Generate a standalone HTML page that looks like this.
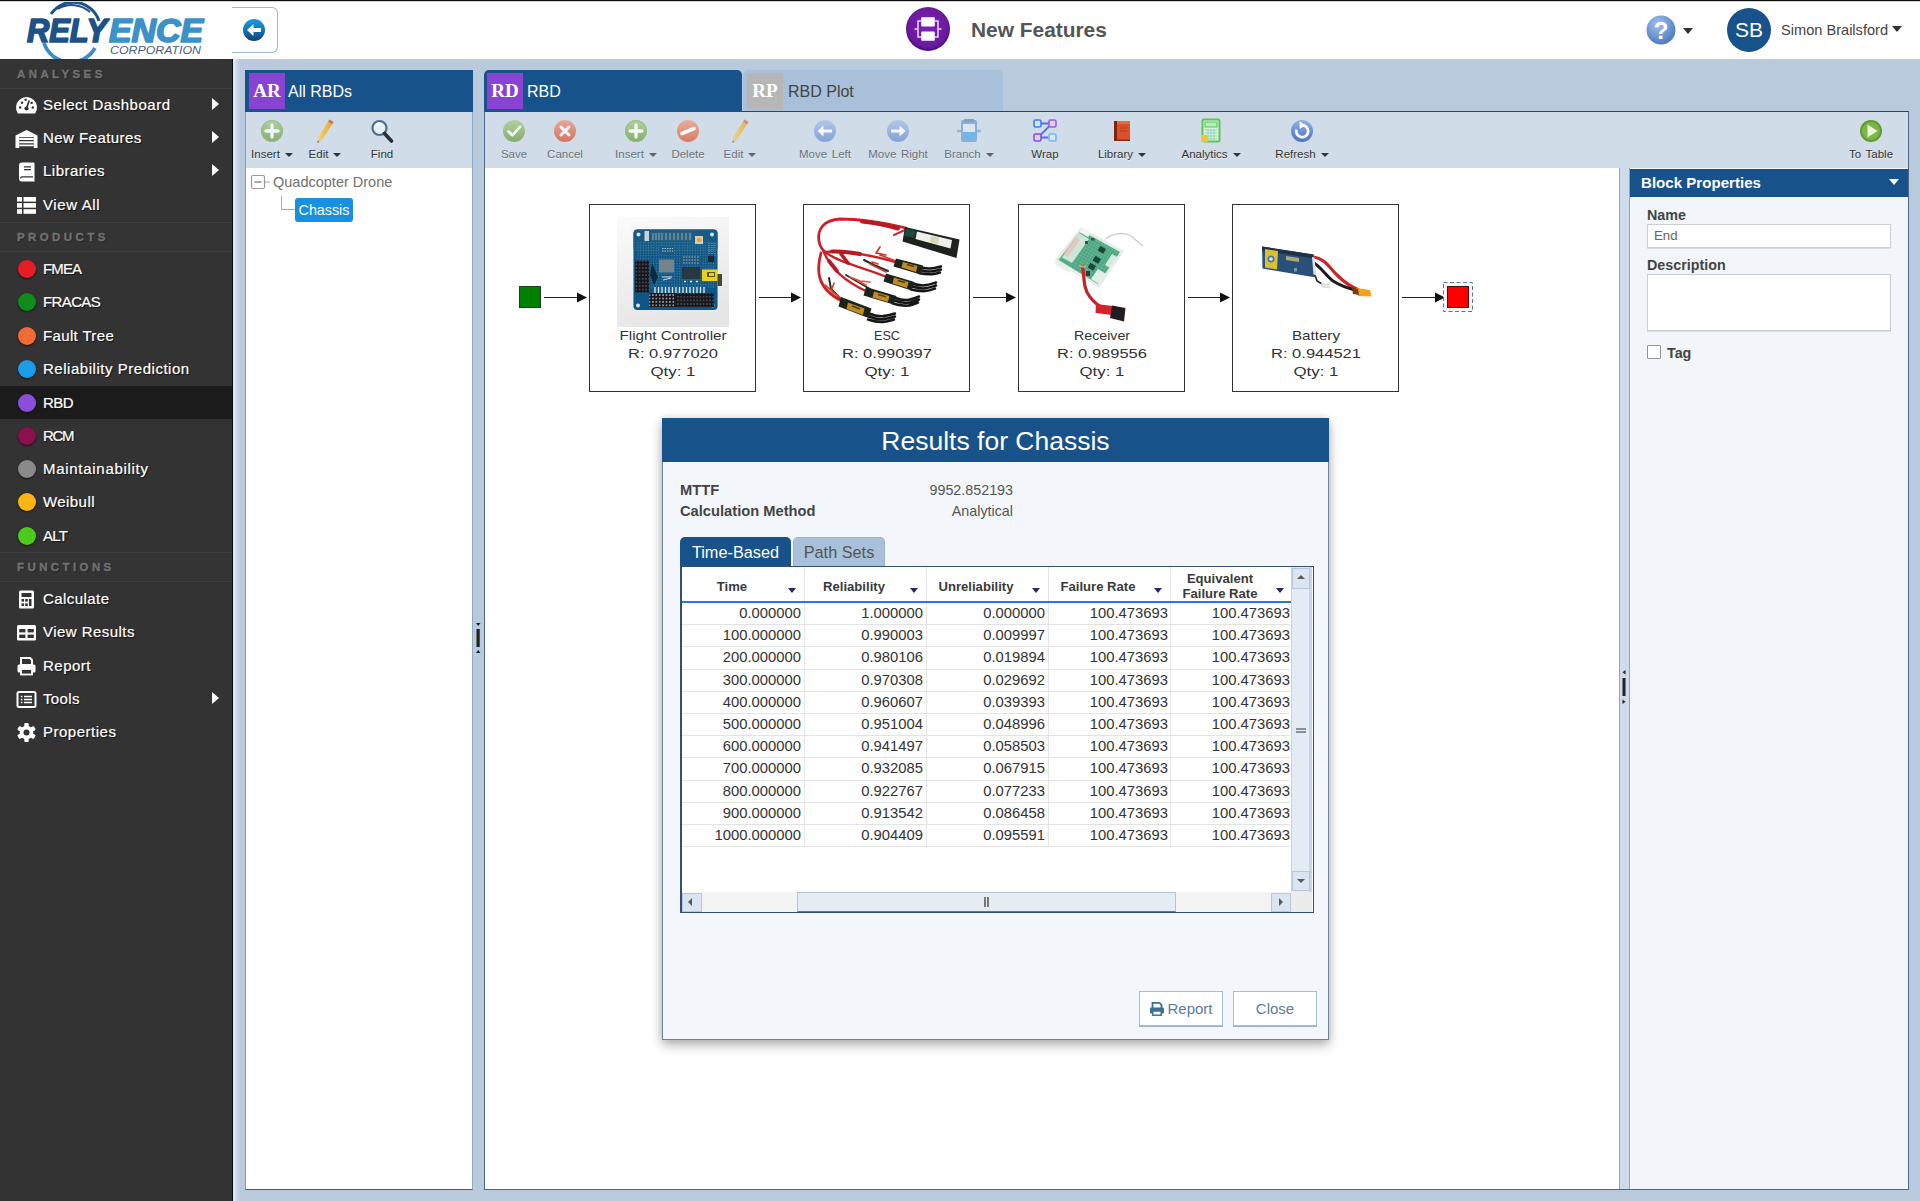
<!DOCTYPE html>
<html>
<head>
<meta charset="utf-8">
<title>Relyence RBD</title>
<style>
*{box-sizing:border-box;margin:0;padding:0}
html,body{width:1920px;height:1201px;overflow:hidden;background:#b9cadd;font-family:"Liberation Sans",sans-serif;}
.abs{position:absolute}
#page{position:relative;width:1920px;height:1201px;overflow:hidden;background:#b9cadd}
#topline{left:0;top:0;width:1920px;height:2px;background:linear-gradient(#0a0a0a 0,#0a0a0a 50%,#b5b5b5 50%,#f0f0f0 100%)}
#header{left:0;top:2px;width:1920px;height:57px;background:#fff}
#sidebar{left:0;top:59px;width:233px;height:1142px;background:#333;border-right:1px solid #0a0a0a}
.sec{left:0;width:232px;height:30px;color:#717171;font-weight:bold;font-size:11.5px;letter-spacing:3.4px;padding-left:17px;line-height:29px;border-top:1px solid #3d3d3d;border-bottom:1px solid #3f3f3f;background:#343434;text-shadow:1px 1px 1px #222;-webkit-text-stroke:.4px #717171}
.mi{left:0;width:232px;height:33px;color:#fff;font-size:15px;line-height:34px;padding-left:43px;letter-spacing:0.55px;text-shadow:1px 1px 1px #111;white-space:nowrap;-webkit-text-stroke:0.2px #fff}
.mi.sel{background:#1b1b1b}
.mi .dot{position:absolute;left:18px;top:8px;width:18px;height:18px;border-radius:50%;box-shadow:0 1px 2px #151515}
.mi svg.ic{position:absolute;left:16px;top:6px;width:21px;height:21px;overflow:visible}
.mi .arr{position:absolute;left:211.5px;top:10px;width:0;height:0;border-left:7px solid #fff;border-top:6.5px solid transparent;border-bottom:6.5px solid transparent}

.ptitle{background:#17528a;color:#fff;font-size:16px;line-height:43px;white-space:nowrap}
.badge{position:absolute;width:36px;height:36px;font-family:"Liberation Serif",serif;font-weight:bold;font-size:19px;color:#fff;text-align:center;line-height:36px;background:#8943d3}
.tbar{background:#d0dce7}
.tb{position:absolute;top:0;height:56px;font-size:11.5px;color:#333;text-align:center;white-space:nowrap;text-shadow:0 1px 0 rgba(255,255,255,.55)}
.tb.dis{color:#69717b}
.tb .lbl{position:absolute;left:-40px;right:-40px;top:35px;line-height:14px;text-align:center;word-spacing:1.5px}
.tb .car{display:inline-block;width:0;height:0;border-top:4.5px solid #333;border-left:4.5px solid transparent;border-right:4.5px solid transparent;margin-left:5px;vertical-align:1px}
.tb.dis .car{border-top-color:#5d646c}
.tb.dis svg{opacity:.78}
.tb svg{position:absolute;left:50%;margin-left:-13px;top:6px;width:26px;height:26px}

.blk{position:absolute;top:204px;width:167px;height:188px;border:1px solid #333;background:#fff}
.blk svg{position:absolute;left:0;top:0}
.bl{font-family:"Liberation Sans",sans-serif;font-size:13.6px;fill:#333}

.plbl{position:absolute;font-weight:bold;font-size:14.3px;color:#444;line-height:16px;white-space:nowrap}
.grid td{height:22.2px}
.gr{position:absolute;left:0;width:608px;height:22.2px;border-bottom:1px solid #e3e3e3;font-size:14.8px;color:#333;line-height:21px}
.gr span{position:absolute;top:0;text-align:right;white-space:nowrap}
.gh{position:absolute;font-weight:bold;font-size:13.1px;color:#3a3a3a;text-align:center;line-height:15.5px;white-space:nowrap}
.gcar{position:absolute;width:0;height:0;border-top:5px solid #2e2466;border-left:4px solid transparent;border-right:4px solid transparent}
.btn{position:absolute;top:991px;height:35px;background:#fff;border:1px solid #a9bdd0;color:#5b7d98;font-size:15px;line-height:33px;text-align:center;box-shadow:0 1px 0 #9fb0c0}
</style>
</head>
<body>
<svg width="0" height="0" style="position:absolute">
<defs>
<linearGradient id="g-green" x1="0" y1="0" x2="0" y2="1"><stop offset="0" stop-color="#a9cf8c"/><stop offset="1" stop-color="#6fa04b"/></linearGradient>
<linearGradient id="g-red" x1="0" y1="0" x2="0" y2="1"><stop offset="0" stop-color="#f09a84"/><stop offset="1" stop-color="#d5573d"/></linearGradient>
<linearGradient id="g-org" x1="0" y1="0" x2="0" y2="1"><stop offset="0" stop-color="#f0a184"/><stop offset="1" stop-color="#d9643f"/></linearGradient>
<linearGradient id="g-blue" x1="0" y1="0" x2="0" y2="1"><stop offset="0" stop-color="#a9c3ea"/><stop offset="1" stop-color="#6f93cf"/></linearGradient>
<linearGradient id="g-blue2" x1="0" y1="0" x2="0" y2="1"><stop offset="0" stop-color="#8fb0e6"/><stop offset="1" stop-color="#4a74bf"/></linearGradient>
<linearGradient id="g-pen" x1="0" y1="0" x2="1" y2="0"><stop offset="0" stop-color="#f6d169"/><stop offset="1" stop-color="#e0a935"/></linearGradient>
<symbol id="i-plus" viewBox="0 0 26 26"><circle cx="13" cy="13" r="11" fill="url(#g-green)"/><circle cx="13" cy="13" r="10.5" fill="none" stroke="#86b465" stroke-width="1"/><path d="M13 7 V19 M7 13 H19" stroke="#fff" stroke-width="3.3" stroke-linecap="round"/></symbol>
<symbol id="i-check" viewBox="0 0 26 26"><circle cx="13" cy="13" r="11" fill="url(#g-green)"/><path d="M7.5 13.5 L11.5 17.2 L19 8.8" fill="none" stroke="#fff" stroke-width="2.7" stroke-linecap="round" stroke-linejoin="round"/></symbol>
<symbol id="i-x" viewBox="0 0 26 26"><circle cx="13" cy="13" r="11" fill="url(#g-red)"/><path d="M9 9 L17 17 M17 9 L9 17" stroke="#fff" stroke-width="3" stroke-linecap="round"/></symbol>
<symbol id="i-minus" viewBox="0 0 26 26"><circle cx="13" cy="13" r="11" fill="url(#g-org)"/><path d="M7 15.5 L19 10.5" stroke="#fff" stroke-width="3.6" stroke-linecap="round"/></symbol>
<symbol id="i-pencil" viewBox="0 0 26 26"><path d="M17.5 1.5 L21.5 4 L10 22 L6 19.5 Z" fill="url(#g-pen)"/><path d="M17.5 1.5 L21.5 4 L20 6.3 L16 3.8 Z" fill="#c77d52"/><path d="M6 19.5 L10 22 L5.5 25 Z" fill="#e8c99a"/><path d="M5.5 25 L5.8 22.7 L7.4 23.7 Z" fill="#555"/></symbol>
<symbol id="i-find" viewBox="0 0 26 26"><circle cx="10.5" cy="10" r="7" fill="#e6f1fa" stroke="#4f6f8c" stroke-width="2.2"/><path d="M15.5 15.5 L22.5 23" stroke="#2b2f36" stroke-width="3.6" stroke-linecap="round"/><path d="M6.5 8 A4.5 4.5 0 0 1 11 5" fill="none" stroke="#fff" stroke-width="1.4"/></symbol>
<symbol id="i-left" viewBox="0 0 26 26"><circle cx="13" cy="13" r="11" fill="url(#g-blue)"/><path d="M5.5 13 L11.5 7.500 V11.600 H20 V14.400 H11.500 V18.500 Z" fill="#fff"/></symbol>
<symbol id="i-right" viewBox="0 0 26 26"><circle cx="13" cy="13" r="11" fill="url(#g-blue)"/><path d="M20.5 13 L14.500 7.500 V11.600 H6 V14.400 H14.500 V18.500 Z" fill="#fff"/></symbol>
<symbol id="i-branch" viewBox="0 0 26 26"><rect x="5" y="2" width="16" height="22" rx="2" fill="#7aa3d8"/><rect x="8" y="1" width="10" height="3" fill="#6f93c4"/><rect x="7" y="6" width="12" height="8" fill="#dfe9f6"/><rect x="7" y="14" width="12" height="8" fill="#58aee6"/><path d="M1 13 H5 M21 13 H25" stroke="#8fa9d6" stroke-width="2.4"/></symbol>
<symbol id="i-wrap" viewBox="0 0 26 26"><path d="M6 5.5 H20 M6 19.5 L20 5.5 M6 19.5 H20" stroke="#5a6fe0" stroke-width="1.8" fill="none"/><rect x="2" y="2" width="7" height="7" rx="1.5" fill="#cfe6fb" stroke="#3f7fe6" stroke-width="1.6"/><rect x="17" y="2" width="7" height="7" rx="1.5" fill="#e0c9f3" stroke="#9b5fd8" stroke-width="1.6"/><rect x="2" y="16" width="7" height="7" rx="1.5" fill="#e0c9f3" stroke="#8b4fd0" stroke-width="1.6"/><rect x="17" y="16" width="7" height="7" rx="1.5" fill="#cfe6fb" stroke="#7db6f2" stroke-width="1.6"/></symbol>
<symbol id="i-library" viewBox="0 0 26 26"><path d="M5 3 H21 V23 H5 Z" fill="#d9502a"/><path d="M5 3 H8 V23 H5 Z" fill="#7c2410"/><path d="M8 3 H21 V6 H8 Z" fill="#e9683d"/><path d="M11 10 H18 M11 13 H18" stroke="#b93c1c" stroke-width="1.2"/><path d="M5 21.5 H21 V23 H5 Z" fill="#8a2a12"/></symbol>
<symbol id="i-analytics" viewBox="0 0 26 26"><rect x="4.5" y="1.5" width="17" height="22" rx="1.5" fill="#d8f2dc" stroke="#5ec45a" stroke-width="2"/><rect x="7" y="4" width="12" height="5" fill="#b8ecc0" stroke="#5ec45a" stroke-width="1"/><path d="M7 12 H19 M7 15 H19 M7 18 H19 M7 21 H19 M10 11 V22 M13 11 V22 M16 11 V22" stroke="#8ed0c0" stroke-width="0.9"/><rect x="3" y="17" width="7" height="7" fill="#f5c338"/></symbol>
<symbol id="i-refresh" viewBox="0 0 26 26"><circle cx="13" cy="13" r="11" fill="url(#g-blue2)"/><path d="M13.5 7.2 A6 6 0 1 1 7.4 11.6" fill="none" stroke="#fff" stroke-width="2.8"/><path d="M10.5 3.2 L16.2 7.2 L10.8 11 Z" fill="#fff"/></symbol>
<symbol id="i-totable" viewBox="0 0 26 26"><circle cx="13" cy="13" r="11" fill="#5f9a2e"/><circle cx="13" cy="13" r="9" fill="#7ab845"/><path d="M9.5 6.5 L19.5 13 L9.5 19.5 Z" fill="#eaf5dc"/></symbol>
</defs>
</svg>
<div id="page">
<div id="topline" class="abs"></div>
<div id="header" class="abs"></div>
<div id="sidebar" class="abs"></div>
<!-- logo -->
<svg class="abs" style="left:0;top:2px" width="232" height="57" viewBox="0 2 232 57">
  <path d="M51 14 A27 27 0 0 1 99 21" fill="none" stroke="#1d5288" stroke-width="3"/>
  <path d="M58 9 A27 27 0 0 1 90 12" fill="none" stroke="#1d5288" stroke-width="2"/>
  <path d="M44 43 A28 28 0 0 0 95 48" fill="none" stroke="#3b8fc4" stroke-width="3.8"/>
  <text x="27" y="41.6" font-family="Liberation Sans, sans-serif" font-weight="bold" font-style="italic" font-size="32.5" fill="#1d5288" textLength="80" lengthAdjust="spacingAndGlyphs" stroke="#1d5288" stroke-width="1.7" stroke-linejoin="round">RELY</text>
  <text x="109" y="41.6" font-family="Liberation Sans, sans-serif" font-weight="bold" font-style="italic" font-size="32.5" fill="#3b92c8" textLength="94" lengthAdjust="spacingAndGlyphs" stroke="#3b92c8" stroke-width="1.7" stroke-linejoin="round">ENCE</text>
  <text x="110" y="54" font-family="Liberation Sans, sans-serif" font-style="italic" font-size="11.5" fill="#4a6278" textLength="91" lengthAdjust="spacingAndGlyphs">CORPORATION</text>
</svg>
<!-- collapse tab -->
<div class="abs" style="left:232px;top:7px;width:46px;height:46px;background:#fff;border:1px solid #9db8d2;border-left:none;border-radius:0 6px 6px 0"></div>
<svg class="abs" style="left:242px;top:18px" width="24" height="24" viewBox="0 0 24 24">
  <defs><linearGradient id="gcb" x1="0" y1="0" x2="0" y2="1"><stop offset="0" stop-color="#1a9be0"/><stop offset="0.5" stop-color="#1474b8"/><stop offset="1" stop-color="#123f75"/></linearGradient></defs>
  <circle cx="12" cy="12" r="11" fill="url(#gcb)"/>
  <path d="M5 12 L11.5 6 V10 H19 V14 H11.5 V18 Z" fill="#fff"/>
</svg>
<!-- purple circle -->
<svg class="abs" style="left:905px;top:6px" width="46" height="46" viewBox="0 0 46 46">
  <defs><radialGradient id="gpu" cx="0.5" cy="0.45" r="0.55"><stop offset="0" stop-color="#7d24b0"/><stop offset="0.8" stop-color="#6a1a9e"/><stop offset="1" stop-color="#4b0f78"/></radialGradient></defs>
  <circle cx="23" cy="23" r="22" fill="url(#gpu)"/>
  <rect x="16.2" y="11.2" width="13.6" height="9.3" rx="1" fill="#fff"/>
  <rect x="16.2" y="25.4" width="13.6" height="9.3" rx="1" fill="#fff"/>
  <path d="M16.5 15 H13 V31 H16.5 M29.500 15 H33 V31 H29.500 M9.500 23 H13 M33 23 H36.500" fill="none" stroke="#e9d6f5" stroke-width="1.500"/>
</svg>
<div class="abs" style="left:971px;top:18px;font-size:20.9px;font-weight:bold;color:#555;line-height:24px;white-space:nowrap">New Features</div>
<!-- help -->
<svg class="abs" style="left:1645px;top:14px" width="32" height="32" viewBox="0 0 32 32">
  <defs><radialGradient id="ghl" cx="0.4" cy="0.3" r="0.8"><stop offset="0" stop-color="#a4c2ea"/><stop offset="0.6" stop-color="#6690cf"/><stop offset="1" stop-color="#4a72b4"/></radialGradient></defs>
  <circle cx="16" cy="16" r="14.5" fill="url(#ghl)"/>
  <text x="16" y="24.5" text-anchor="middle" font-family="Liberation Sans, sans-serif" font-weight="bold" font-size="24" fill="#fff">?</text>
</svg>
<div class="abs" style="left:1683px;top:28px;width:0;height:0;border-top:6px solid #333;border-left:5.5px solid transparent;border-right:5.5px solid transparent"></div>
<div class="abs" style="left:1727px;top:8px;width:44px;height:44px;border-radius:50%;background:#17528a;color:#fff;font-size:21px;line-height:44px;text-align:center">SB</div>
<div class="abs" style="left:1781px;top:21px;font-size:14.6px;color:#444;line-height:18px;white-space:nowrap">Simon Brailsford</div>
<div class="abs" style="left:1892px;top:26px;width:0;height:0;border-top:6px solid #333;border-left:5.5px solid transparent;border-right:5.5px solid transparent"></div>
<div class="abs sec" style="top:59px;border-top:none;line-height:30px">ANALYSES</div>
<div class="abs mi" style="top:88px;letter-spacing:0.52px"><svg class="ic" viewBox="0 0 21 21"><path d="M1.9 19.5 A10.5 10.5 0 1 1 19.1 19.5 Z" fill="#fff"/><circle cx="10.5" cy="14.5" r="2.1" fill="#333"/><path d="M10.5 14.5 L13.2 6.5" stroke="#333" stroke-width="1.7"/><circle cx="4.2" cy="13.5" r="1.2" fill="#333"/><circle cx="6" cy="8.7" r="1.2" fill="#333"/><circle cx="16.8" cy="13.5" r="1.2" fill="#333"/><circle cx="9.6" cy="5.8" r="1.2" fill="#333"/><circle cx="15.6" cy="8.9" r="1.2" fill="#333"/></svg>Select Dashboard<span class="arr"></span></div>
<div class="abs mi" style="top:121px;letter-spacing:0.45px"><svg class="ic" viewBox="0 0 21 21"><path d="M-0.5 8.5 L10.5 3 L21.5 8.5 V21 H-0.5 Z" fill="#fff"/><rect x="3.2" y="10.2" width="14.6" height="10.8" fill="#333"/><path d="M3.2 12 H17.8 M3.2 15.2 H17.8 M3.2 18.4 H17.8" stroke="#fff" stroke-width="1.9"/></svg>New Features<span class="arr"></span></div>
<div class="abs mi" style="top:154px;letter-spacing:0.50px"><svg class="ic" viewBox="0 0 21 21"><path d="M6 2.500 H17.500 A1 1 0 0 1 18.500 3.500 V21.500 H6 A3 3 0 0 1 3 18.500 V5.500 A3 3 0 0 1 6 2.500 Z" fill="#fff"/><path d="M4.600 18.500 A1.600 1.600 0 0 1 6.200 16.900 H17" fill="none" stroke="#333" stroke-width="1.300"/><path d="M8 6.800 H15 M8 9.600 H15" stroke="#333" stroke-width="1.200"/></svg>Libraries<span class="arr"></span></div>
<div class="abs mi" style="top:188px;letter-spacing:0.61px"><svg class="ic" viewBox="0 0 21 21"><rect x="1" y="3" width="5" height="4.600" fill="#fff"/><rect x="7.500" y="3" width="12.500" height="4.600" fill="#fff"/><rect x="1" y="9.100" width="5" height="4.600" fill="#fff"/><rect x="7.500" y="9.100" width="12.500" height="4.600" fill="#fff"/><rect x="1" y="15.200" width="5" height="4.600" fill="#fff"/><rect x="7.500" y="15.200" width="12.500" height="4.600" fill="#fff"/></svg>View All</div>
<div class="abs sec" style="top:222px">PRODUCTS</div>
<div class="abs mi" style="top:252px;letter-spacing:-0.89px"><span class="dot" style="background:#e31e24"></span>FMEA</div>
<div class="abs mi" style="top:285px;letter-spacing:-0.62px"><span class="dot" style="background:#0f8c1a"></span>FRACAS</div>
<div class="abs mi" style="top:319px;letter-spacing:0.36px"><span class="dot" style="background:#f26a35"></span>Fault Tree</div>
<div class="abs mi" style="top:352px;letter-spacing:0.53px"><span class="dot" style="background:#1b9be8"></span>Reliability Prediction</div>
<div class="abs mi sel" style="top:386px;letter-spacing:-0.59px"><span class="dot" style="background:#8a4ddc"></span>RBD</div>
<div class="abs mi" style="top:419px;letter-spacing:-1.33px"><span class="dot" style="background:#8c0f4e"></span>RCM</div>
<div class="abs mi" style="top:452px;letter-spacing:0.71px"><span class="dot" style="background:#8a8a8a"></span>Maintainability</div>
<div class="abs mi" style="top:485px;letter-spacing:0.43px"><span class="dot" style="background:#fdb515"></span>Weibull</div>
<div class="abs mi" style="top:519px;letter-spacing:-0.70px"><span class="dot" style="background:#4dcb1c"></span>ALT</div>
<div class="abs sec" style="top:552px">FUNCTIONS</div>
<div class="abs mi" style="top:582px;letter-spacing:0.43px"><svg class="ic" style="top:7px" viewBox="0 0 21 21"><rect x="3" y="1.5" width="15" height="18" rx="1.5" fill="#fff"/><rect x="5.5" y="4" width="10" height="4" fill="#333"/><rect x="5.5" y="10" width="2.6" height="2.6" fill="#333"/><rect x="9.2" y="10" width="2.6" height="2.6" fill="#333"/><rect x="12.9" y="10" width="2.6" height="7" fill="#333"/><rect x="5.5" y="14.4" width="2.6" height="2.6" fill="#333"/><rect x="9.2" y="14.4" width="2.6" height="2.6" fill="#333"/></svg>Calculate</div>
<div class="abs mi" style="top:615px;letter-spacing:0.46px"><svg class="ic" style="top:7px" viewBox="0 0 21 21"><rect x="1" y="3" width="19" height="15.5" rx="1.5" fill="#fff"/><rect x="3.2" y="7" width="6.2" height="3.4" fill="#333"/><rect x="11.6" y="7" width="6.2" height="3.4" fill="#333"/><rect x="3.2" y="12.6" width="6.2" height="3.4" fill="#333"/><rect x="11.6" y="12.6" width="6.2" height="3.4" fill="#333"/></svg>View Results</div>
<div class="abs mi" style="top:649px;letter-spacing:0.49px"><svg class="ic" style="top:7px" viewBox="0 0 21 21"><path d="M5 2 H14 L16 4 V9 H5 Z" fill="none" stroke="#fff" stroke-width="2"/><rect x="1.5" y="8.5" width="18" height="8" rx="1.5" fill="#fff"/><rect x="5" y="13" width="11" height="5.5" fill="#333" stroke="#fff" stroke-width="1.8"/></svg>Report</div>
<div class="abs mi" style="top:682px;letter-spacing:0.37px"><svg class="ic" style="top:7px" viewBox="0 0 21 21"><rect x="1.5" y="3" width="18" height="15" rx="1.5" fill="none" stroke="#fff" stroke-width="2"/><path d="M8 7.5 H16 M8 10.5 H16 M8 13.5 H16" stroke="#fff" stroke-width="1.6"/><path d="M4.8 7.5 H6.4 M4.8 10.5 H6.4 M4.8 13.5 H6.4" stroke="#fff" stroke-width="1.6"/></svg>Tools<span class="arr"></span></div>
<div class="abs mi" style="top:715px;letter-spacing:0.51px"><svg class="ic" style="top:7px" viewBox="0 0 21 21"><g transform="translate(10.5 10.5)"><g fill="#fff"><rect x="-2.2" y="-9.5" width="4.4" height="19" rx="1"/><rect x="-2.2" y="-9.5" width="4.4" height="19" rx="1" transform="rotate(60)"/><rect x="-2.2" y="-9.5" width="4.4" height="19" rx="1" transform="rotate(120)"/><circle r="6.8"/></g><circle r="3" fill="#333"/></g></svg>Properties</div>
<div class="abs" style="left:233px;top:59px;width:7px;height:1142px;background:linear-gradient(to right,#e6eff8,#cfdcec 45%,#b9cadd)"></div>
<!-- tree panel -->
<div class="abs" style="left:245px;top:70px;width:228px;height:1120px;background:#fff;border:1px solid #8fa9c4;border-bottom-color:#3d5a78;border-left-color:#7f9ab8"></div>
<div class="abs ptitle" style="left:245px;top:70px;width:228px;height:42px;padding-left:43px">All RBDs<span class="badge" style="left:4px;top:3px">AR</span></div>
<div class="abs tbar" style="left:246px;top:112px;width:226px;height:56px">
  <div class="tb" style="left:26px;width:0"><svg viewBox="0 0 26 26" style="opacity:.78"><use href="#i-plus"/></svg><div class="lbl">Insert<span class="car"></span></div></div>
  <div class="tb" style="left:79px;width:0"><svg viewBox="0 0 26 26"><use href="#i-pencil"/></svg><div class="lbl">Edit<span class="car"></span></div></div>
  <div class="tb" style="left:136px;width:0"><svg viewBox="0 0 26 26"><use href="#i-find"/></svg><div class="lbl">Find</div></div>
</div>
<!-- tree -->
<svg class="abs" style="left:250px;top:174px" width="50" height="44" viewBox="0 0 50 44">
  <rect x="1.5" y="1.5" width="13" height="13" rx="1.5" fill="#fff" stroke="#9a9a9a" stroke-width="1.2"/>
  <path d="M4.5 8 H11.5" stroke="#777" stroke-width="1.3"/>
  <path d="M15 8 H20" stroke="#aaa" stroke-width="1"/>
  <path d="M31.5 22 V35.5 H45" fill="none" stroke="#aaa" stroke-width="1"/>
</svg>
<div class="abs" style="left:273px;top:173px;font-size:14.5px;color:#717171;line-height:19px;white-space:nowrap">Quadcopter Drone</div>
<div class="abs" style="left:295px;top:198px;width:58px;height:24px;background:#1790df;border-radius:3px;color:#fff;font-size:14.3px;line-height:24px;text-align:center">Chassis</div>
<!-- splitter 1 handle -->
<svg class="abs" style="left:473px;top:618px" width="10" height="40" viewBox="0 0 10 40"><path d="M3 5 H7.500 L5.250 8 Z M3 35 H7.500 L5.250 32 Z" fill="#222"/><rect x="3.500" y="11" width="3.200" height="18" fill="#222"/></svg>

<!-- main panel -->
<div class="abs" style="left:484px;top:111px;width:1425px;height:1079px;border:1px solid #4b6788;border-top-color:#27466a;background:#cfdbe8"></div>
<div class="abs ptitle" style="left:484px;top:70px;width:258px;height:42px;padding-left:43px;border-radius:5px 5px 0 0">RBD<span class="badge" style="left:3px;top:3px">RD</span></div>
<div class="abs ptitle" style="left:743px;top:70px;width:260px;height:41px;padding-left:45px;border-radius:5px 5px 0 0;background:#a8c0d9;color:#444">RBD Plot<span class="badge" style="left:4px;top:3px;background:#b6b6b6">RP</span></div>
<div class="abs tbar" style="left:485px;top:112px;width:1423px;height:56px">
  <div class="tb dis" style="left:29px;width:0"><svg viewBox="0 0 26 26"><use href="#i-check"/></svg><div class="lbl">Save</div></div>
  <div class="tb dis" style="left:80px;width:0"><svg viewBox="0 0 26 26"><use href="#i-x"/></svg><div class="lbl">Cancel</div></div>
  <div class="tb dis" style="left:151px;width:0"><svg viewBox="0 0 26 26"><use href="#i-plus"/></svg><div class="lbl">Insert<span class="car"></span></div></div>
  <div class="tb dis" style="left:203px;width:0"><svg viewBox="0 0 26 26"><use href="#i-minus"/></svg><div class="lbl">Delete</div></div>
  <div class="tb dis" style="left:255px;width:0"><svg viewBox="0 0 26 26"><use href="#i-pencil"/></svg><div class="lbl">Edit<span class="car"></span></div></div>
  <div class="tb dis" style="left:340px;width:0"><svg viewBox="0 0 26 26"><use href="#i-left"/></svg><div class="lbl">Move Left</div></div>
  <div class="tb dis" style="left:413px;width:0"><svg viewBox="0 0 26 26"><use href="#i-right"/></svg><div class="lbl">Move Right</div></div>
  <div class="tb dis" style="left:484px;width:0"><svg viewBox="0 0 26 26" style="opacity:.8"><use href="#i-branch"/></svg><div class="lbl">Branch<span class="car"></span></div></div>
  <div class="tb" style="left:560px;width:0"><svg viewBox="0 0 26 26"><use href="#i-wrap"/></svg><div class="lbl">Wrap</div></div>
  <div class="tb" style="left:637px;width:0"><svg viewBox="0 0 26 26"><use href="#i-library"/></svg><div class="lbl">Library<span class="car"></span></div></div>
  <div class="tb" style="left:726px;width:0"><svg viewBox="0 0 26 26"><use href="#i-analytics"/></svg><div class="lbl">Analytics<span class="car"></span></div></div>
  <div class="tb" style="left:817px;width:0"><svg viewBox="0 0 26 26"><use href="#i-refresh"/></svg><div class="lbl">Refresh<span class="car"></span></div></div>
  <div class="tb" style="left:1386px;width:0"><svg viewBox="0 0 26 26"><use href="#i-totable"/></svg><div class="lbl">To Table</div></div>
</div>
<!-- canvas -->
<div class="abs" style="left:485px;top:168px;width:1134px;height:1021px;background:#fff"></div>
<!-- splitter 2 -->
<div class="abs" style="left:1619px;top:168px;width:11px;height:1021px;background:#cddbea;border-left:1px solid #8fa6c0;border-right:1px solid #8fa6c0"></div>
<svg class="abs" style="left:1619px;top:667px" width="10" height="40" viewBox="0 0 10 40"><path d="M6.500 3 V7.500 L3.500 5.250 Z M3.500 32.500 V37 L6.500 34.750 Z" fill="#222"/><rect x="3.5" y="11" width="3" height="18" fill="#222"/></svg>

<!-- diagram -->
<div class="abs" style="left:519px;top:286px;width:22px;height:22px;background:#008000;border:1px solid #1f3f1f"></div>
<svg class="abs" style="left:0;top:0;pointer-events:none" width="1920" height="400" viewBox="0 0 1920 400">
<path d="M544 297.5 H578" stroke="#222" stroke-width="1.2"/><path d="M587 297.5 L577 292.5 V302.5 Z" fill="#111"/><path d="M759 297.5 H792" stroke="#222" stroke-width="1.2"/><path d="M801 297.5 L791 292.5 V302.5 Z" fill="#111"/><path d="M973 297.5 H1007" stroke="#222" stroke-width="1.2"/><path d="M1016 297.5 L1006 292.5 V302.5 Z" fill="#111"/><path d="M1188 297.5 H1221" stroke="#222" stroke-width="1.2"/><path d="M1230 297.5 L1220 292.5 V302.5 Z" fill="#111"/><path d="M1402 297.5 H1436" stroke="#222" stroke-width="1.2"/><path d="M1445 297.5 L1435 292.5 V302.5 Z" fill="#111"/>
<rect x="1443.500" y="282.500" width="29" height="29" fill="#f4f8fb" stroke="#5f7886" stroke-width="1" stroke-dasharray="4 2.5"/>
</svg>
<div class="abs" style="left:1447px;top:286px;width:22px;height:22px;background:#ff0000;border:1px solid #3a1010"></div>
<div class="blk" style="left:589px"><svg width="166" height="187" viewBox="0 0 166 187">
<defs><filter id="bl1" x="-5%" y="-5%" width="110%" height="110%"><feGaussianBlur stdDeviation="0.45"/></filter>
<pattern id="pins" width="3.4" height="3.4" patternUnits="userSpaceOnUse"><rect width="3.4" height="3.4" fill="#15181c"/><circle cx="1.7" cy="1.7" r="0.75" fill="#cfd4d8"/></pattern>
<pattern id="pins2" width="3.2" height="3.6" patternUnits="userSpaceOnUse"><rect width="3.2" height="3.6" fill="#15181c"/><circle cx="1.6" cy="1.8" r="0.6" fill="#8d949a"/></pattern></defs>
<linearGradient id="fcbg" x1="0" y1="0" x2="0.3" y2="1"><stop offset="0" stop-color="#fbfbfb"/><stop offset="1" stop-color="#e6e6e6"/></linearGradient><pattern id="tex" width="2.6" height="2.6" patternUnits="userSpaceOnUse"><circle cx="1.3" cy="1.3" r="0.55" fill="#8fc0da" opacity=".55"/></pattern><rect x="27" y="12" width="112" height="110" fill="url(#fcbg)"/>
<g filter="url(#bl1)">
<rect x="43.5" y="24.5" width="84" height="80.5" rx="4" fill="#135f8e"/>
<rect x="43.5" y="24.5" width="84" height="22" rx="4" fill="#17658f"/><rect x="46" y="37" width="80" height="46" fill="url(#tex)"/><rect x="43.5" y="24.5" width="84" height="80.5" rx="4" fill="#0b3a5e" opacity=".18"/>
<rect x="61" y="27" width="42" height="9" fill="#2a5f80"/>
<path d="M63 28 v7 M66 28 v7 M69 28 v7 M72 28 v7 M76 28 v7 M80 28 v7 M84 28 v7 M88 28 v7 M92 28 v7 M96 28 v7 M100 28 v7" stroke="#9fc3d6" stroke-width="0.8"/>
<rect x="54.5" y="26" width="4.5" height="10" fill="#c9d2d6"/>
<rect x="105" y="31" width="8" height="8" fill="#d8c9a8"/><circle cx="109" cy="35" r="2" fill="#e39a4a"/>
<circle cx="48.5" cy="29.5" r="2" fill="#d9e6ee"/><circle cx="122" cy="29.5" r="2" fill="#d9e6ee"/><circle cx="48" cy="100.5" r="2" fill="#d9e6ee"/><circle cx="122.5" cy="100.5" r="2" fill="#a9b4ba"/>
<rect x="69" y="54.5" width="15" height="13" fill="#74838b"/>
<rect x="92" y="51" width="19" height="8" fill="#1f5477"/><path d="M93 52 h17 M93 55 h17 M93 58 h17" stroke="#a9c9da" stroke-width="0.9" stroke-dasharray="1.6 1.2"/>
<rect x="92" y="62" width="18.5" height="12" fill="#27383f"/>
<path d="M94 76.5 h2 M100 76.5 h2 M106 76.5 h2" stroke="#e6eef2" stroke-width="1.6"/>
<rect x="112" y="64.5" width="16" height="11.5" fill="#ead21c"/><rect x="117" y="67" width="8" height="5" fill="#5a5410"/><rect x="119" y="68" width="5" height="3" fill="#ead21c"/>
<rect x="127.5" y="69" width="4.5" height="12" fill="#4a4632"/>
<rect x="118" y="50" width="6" height="7" fill="#1a2830"/>
<rect x="71" y="42" width="13" height="7" fill="#1e5a80"/><path d="M72 43.5 h11 M72 46 h11" stroke="#b7d3e2" stroke-width="0.9" stroke-dasharray="1.5 1"/>
<path d="M62 58 L68 72 L64 80 L60 70 Z" fill="#0f2a3c"/>
<path d="M72 72 h10 M73 75 l8 -2" stroke="#c6dbe6" stroke-width="1"/>
<rect x="45" y="55.5" width="14" height="32" fill="url(#pins2)"/>
<rect x="63" y="82" width="53" height="6" fill="#135f8e"/><path d="M65 82 v6 M68.5 82 v6 M72 82 v6 M75.500 82 v6 M79 82 v6 M82.500 82 v6 M86 82 v6 M89.500 82 v6 M93 82 v6 M96.500 82 v6 M100 82 v6 M103.500 82 v6 M107 82 v6 M110.500 82 v6 M114 82 v6" stroke="#dde6ea" stroke-width="1.3"/>
<rect x="59" y="88" width="27" height="14" fill="url(#pins)"/>
<rect x="86" y="88" width="38" height="14" fill="url(#pins2)"/>
<path d="M119 38 v14 M122 38 v14 M125 38 v14" stroke="#7fa6bd" stroke-width="0.9" stroke-dasharray="1 1"/>
</g>
<text class="bl" x="29.5" y="134.6" textLength="107" lengthAdjust="spacingAndGlyphs">Flight Controller</text><text class="bl" x="38.0" y="152.6" textLength="90" lengthAdjust="spacingAndGlyphs">R: 0.977020</text><text class="bl" x="60.5" y="170.6" textLength="45" lengthAdjust="spacingAndGlyphs">Qty: 1</text></svg></div>
<div class="blk" style="left:803px"><svg width="166" height="187" viewBox="0 0 166 187">
<defs><filter id="bl2" x="-5%" y="-5%" width="110%" height="110%"><feGaussianBlur stdDeviation="0.5"/></filter></defs>
<g filter="url(#bl2)" fill="none" stroke-linecap="round" stroke-linejoin="round">
<path d="M102 23 C80 18 60 14 36 14 C20 15 13 24 15 36 C16 42 18 44 21 47" stroke="#c9242c" stroke-width="2.800"/>
<path d="M94 23.500 C82 20 70 17.500 58 16.500" stroke="#b51c24" stroke-width="4"/>
<path d="M101 25 L90 30" stroke="#d8282f" stroke-width="2"/>
<path d="M21 47 C40 45 66 50 93 57.500" stroke="#c9242c" stroke-width="2.600"/>
<path d="M28 46.500 C38 46 46 47 56 49" stroke="#b51c24" stroke-width="4"/>
<path d="M21 47 C36 58 58 62 84 72.500" stroke="#c9242c" stroke-width="2.400"/>
<path d="M37 49 L44 58" stroke="#b51c24" stroke-width="3.600"/>
<path d="M19 45 C27 66 44 78 63 86.500" stroke="#c9242c" stroke-width="2.400"/>
<path d="M25 56 L33 66" stroke="#b51c24" stroke-width="3.800"/>
<path d="M17 48 C12 66 13 84 38 96" stroke="#c9242c" stroke-width="2.800"/>
<path d="M72 48 L76 42 M72 48 L82 50 M76 50 L92 56" stroke="#d8382f" stroke-width="1.700"/>
<path d="M60 55 L70 60 L84 66" stroke="#2a2a2a" stroke-width="2"/><path d="M66 59 L74 63 L82 67" stroke="#d8382f" stroke-width="1.500"/><path d="M68 57 L74 59" stroke="#d8382f" stroke-width="1.500"/>
<path d="M42 70 L54 77 L66 84" stroke="#2a2a2a" stroke-width="1.800"/><path d="M46 72 L56 76 L66 77 M54 76 L62 80" stroke="#e0563a" stroke-width="1.700"/>
<path d="M25 73 L27 84 L38 95" stroke="#2a2a2a" stroke-width="2"/><path d="M21 80 L30 88 L38 94 M28 84 L30 78" stroke="#d8482f" stroke-width="1.700"/>
<path d="M116 62 C126 65 130 63 137 61.500 M116 65 C126 68 130 66 137 64.500 M115 68 C126 70.500 131 69 136 67.500" stroke="#141617" stroke-width="2.500"/>
<path d="M108 78.500 C120 82 124 80 132 77.500 M108 81.500 C120 85 124 83 132 80.500 M107 84.500 C120 87.500 124 86 131 83.500" stroke="#141617" stroke-width="2.500"/>
<path d="M90 92.500 C102 97 106 95 115 91.500 M90 95.500 C102 99.500 106 98 115 94.500 M89 98.500 C102 102 106 101 114 97.500" stroke="#141617" stroke-width="2.500"/>
<path d="M65 108.500 C76 113 82 111 91 108.500 M65 111.500 C76 116 82 114 91 111.500 M64 114.500 C76 118.500 82 117 90 114.500" stroke="#141617" stroke-width="2.500"/>
</g>
<g filter="url(#bl2)">
<path d="M101 22 L155.500 34.500 L152.500 53 L98.500 36.500 Z" fill="#1a201e"/>
<path d="M113 26.500 L148 35 L146.500 43.500 L111.500 34 Z" fill="#eef0ec"/><path d="M127 30.500 L135 32.500 L134 39.500 L126 37.500 Z" fill="#d6d9b8"/>
<path d="M102 23.500 L112 26 L110 33 L100 30.500 Z" fill="#1d4a40"/>
<path d="M92 53.500 L119 60.500 L116.500 69.500 L89.500 61.500 Z" fill="#1a241c"/><path d="M99 57 L113.500 61 L112 67 L97.500 62.500 Z" fill="#c08a26"/><path d="M103 59.500 L110 61.500" stroke="#4a3a10" stroke-width="1.400"/>
<path d="M82 68.500 L110.500 77 L107.500 85.500 L79.500 76.500 Z" fill="#1a241c"/><path d="M90 72.500 L104.500 77 L103 83 L88.500 78.500 Z" fill="#c08a26"/><path d="M94 75.500 L101 77.500" stroke="#4a3a10" stroke-width="1.400"/>
<path d="M62 82 L92.500 91 L89.500 99.500 L59.500 90.500 Z" fill="#1a241c"/><path d="M70 86.500 L85.500 91 L84 97 L68.500 92.500 Z" fill="#c08a26"/><path d="M74 89.500 L82 91.800" stroke="#4a3a10" stroke-width="1.400"/>
<path d="M37 92 L67.500 103.500 L64.500 113 L34.500 101.500 Z" fill="#1a241c"/><path d="M44 97.500 L60.500 103.500 L59 110 L42.500 104 Z" fill="#c08a26"/><path d="M48 101 L56 104" stroke="#4a3a10" stroke-width="1.400"/>
</g>
<text class="bl" x="70.0" y="134.6" textLength="26" lengthAdjust="spacingAndGlyphs">ESC</text><text class="bl" x="38.0" y="152.6" textLength="90" lengthAdjust="spacingAndGlyphs">R: 0.990397</text><text class="bl" x="60.5" y="170.6" textLength="45" lengthAdjust="spacingAndGlyphs">Qty: 1</text></svg></div>
<div class="blk" style="left:1018px"><svg width="166" height="187" viewBox="0 0 166 187">
<defs><filter id="bl3" x="-5%" y="-5%" width="110%" height="110%"><feGaussianBlur stdDeviation="0.5"/></filter>
<pattern id="tex3" width="3" height="3" patternUnits="userSpaceOnUse" patternTransform="rotate(30)"><rect x="0.400" y="0.400" width="1.200" height="1.200" fill="#d8f0e4" opacity=".55"/></pattern></defs>
<g filter="url(#bl3)">
<path d="M86 34 C94 28 106 27 112 31 C117 35 120 38 124 41" fill="none" stroke="#cfcfcf" stroke-width="1.500"/>
<path d="M62 22 L105 46 L80 83 L35.500 55.500 Z" fill="#e4ece6"/>
<path d="M62 25.500 L101 47 L79 79 L39.500 55 Z" fill="#4aa680"/>
<path d="M62 25.500 L101 47 L79 79 L39.500 55 Z" fill="url(#tex3)"/>
<path d="M60 28 L70 34 L53 58 L43 52.500 Z" fill="#dcece2" opacity=".9"/><path d="M56 32 L61 35 L49 52 L44.500 49.500 Z" fill="#e6bfb6" opacity=".75"/>
<path d="M63 23 L72 28 L69 32 L60 27 Z" fill="#eef4ef"/>
<path d="M93 49 L100 53 L93 64 L86 60 Z" fill="#e3efe7" opacity=".9"/><path d="M79 64 L87 69 L80 79 L72 74 Z" fill="#e9f2ec" opacity=".95"/>
<path d="M38 54.500 L53 63.500 L50 68 L35.500 59 Z" fill="#e6f0e9" opacity=".95"/>
<rect x="80" y="42" width="6.500" height="5.500" fill="#1f4638" transform="rotate(30 83 44)"/>
<rect x="75" y="52" width="6.500" height="5.500" fill="#1f4638" transform="rotate(30 78 54)"/>
<rect x="70" y="59" width="6.500" height="5.500" fill="#1f4638" transform="rotate(30 73 61)"/>
<rect x="66" y="36" width="3" height="3" fill="#2a5a48"/><rect x="72" y="33" width="3.500" height="2.500" fill="#2a5a48"/>
<path d="M63 60 C66 70 63 82 71 92 C75 97 78 100 83 102.500" fill="none" stroke="#c8202a" stroke-width="3.200"/>
<path d="M60 61 L67 62" stroke="#d9a07a" stroke-width="2"/>
<rect x="67" y="66" width="4" height="5" fill="#263a30"/>
<path d="M77 99 L94 101 L93 110 L76.500 108 Z" fill="#d4232b"/>
<path d="M93 100.500 L106.500 103 L105 116.500 L91 113 Z" fill="#231f20"/>
</g>
<text class="bl" x="55.0" y="134.6" textLength="56" lengthAdjust="spacingAndGlyphs">Receiver</text><text class="bl" x="38.0" y="152.6" textLength="90" lengthAdjust="spacingAndGlyphs">R: 0.989556</text><text class="bl" x="60.5" y="170.6" textLength="45" lengthAdjust="spacingAndGlyphs">Qty: 1</text></svg></div>
<div class="blk" style="left:1232px"><svg width="166" height="187" viewBox="0 0 166 187">
<defs><filter id="bl4" x="-5%" y="-5%" width="110%" height="110%"><feGaussianBlur stdDeviation="0.45"/></filter></defs>
<g filter="url(#bl4)">
<path d="M81 52 C92 54 96 62 104 70 C112 78 118 82 126 85" fill="none" stroke="#c8262a" stroke-width="3.200"/>
<path d="M81 58 C88 62 92 70 100 76 C108 81 114 83 122 85" fill="none" stroke="#1d1a1a" stroke-width="3"/>
<path d="M82 70 L84 76 L89 79" fill="none" stroke="#222" stroke-width="1.600"/>
<path d="M88 78 L96 79.500 L96.500 83 L89 82 Z" fill="#e8e8e4" stroke="#bbb" stroke-width=".4"/>
<path d="M123 83 L137 85 L138.500 91.500 L125 91 Z" fill="#f3a01c"/><path d="M119 83 L125 84 L126 90 L120 89 Z" fill="#7a3a18"/>
<path d="M29 41.500 L80.500 49.500 L83 72.500 L29.500 63.500 Z" fill="#2c5079"/>
<path d="M29 41.500 L80.500 49.500 L80.700 53.500 L29 45.500 Z" fill="#1f3046"/>
<path d="M32 44 L45 46 L44 64.500 L32 62.500 Z" fill="#d9c136"/><circle cx="38" cy="54" r="3.500" fill="#4a7a9a"/><circle cx="38" cy="54" r="1.800" fill="#dfe6ea"/>
<path d="M53 51 L66 53 L66 57 L53 55 Z" fill="#c9c078" opacity=".8"/>
<path d="M79 52 L81.500 52.500 L83 70 L80.500 69.500 Z" fill="#dfe4e8"/>
<rect x="61" y="63" width="3" height="3.500" fill="#9fb4c8" opacity=".7"/>
</g>
<text class="bl" x="59.0" y="134.6" textLength="48" lengthAdjust="spacingAndGlyphs">Battery</text><text class="bl" x="38.0" y="152.6" textLength="90" lengthAdjust="spacingAndGlyphs">R: 0.944521</text><text class="bl" x="60.5" y="170.6" textLength="45" lengthAdjust="spacingAndGlyphs">Qty: 1</text></svg></div>

<!-- properties -->
<div class="abs" style="left:1630px;top:168px;width:279px;height:1021px;background:#f2f6fa;border-right:1px solid #4b6788"></div>
<div class="abs" style="left:1630px;top:169px;width:278px;height:28px;background:#17528a;color:#fff;font-weight:bold;font-size:15.1px;line-height:28px;padding-left:11px">Block Properties</div>
<div class="abs" style="left:1889px;top:179px;width:0;height:0;border-top:6px solid #fff;border-left:5px solid transparent;border-right:5px solid transparent"></div>
<div class="plbl" style="left:1647px;top:207px">Name</div>
<div class="abs" style="left:1647px;top:224px;width:244px;height:24px;background:#fff;border:1px solid #c9ced3;box-shadow:0 1px 0 #d9dde0;font-size:13.3px;color:#666;line-height:22px;padding-left:6px">End</div>
<div class="plbl" style="left:1647px;top:257px">Description</div>
<div class="abs" style="left:1647px;top:274px;width:244px;height:57px;background:#fff;border:1px solid #c9ced3;box-shadow:0 1px 0 #d9dde0"></div>
<div class="abs" style="left:1647px;top:345px;width:14px;height:14px;background:#fff;border:1px solid #8e959c;border-radius:1px"></div>
<div class="plbl" style="left:1667px;top:345px">Tag</div>

<!-- dialog -->
<div class="abs" style="left:662px;top:418px;width:667px;height:622px;background:#f3f7fb;border:1px solid #6f8296;border-top:none;box-shadow:0 5px 11px rgba(0,0,0,.30),0 0 7px rgba(0,0,0,.10)"></div>
<div class="abs" style="left:662px;top:418px;width:667px;height:44px;background:#17528a;color:#fff;font-size:26.5px;line-height:46px;text-align:center">Results for Chassis</div>
<div class="plbl" style="left:680px;top:482px;font-size:14.7px">MTTF</div>
<div class="abs" style="left:880px;top:482px;width:133px;text-align:right;font-size:14.3px;color:#555;line-height:16px">9952.852193</div>
<div class="plbl" style="left:680px;top:503px;font-size:14.7px">Calculation Method</div>
<div class="abs" style="left:880px;top:503px;width:133px;text-align:right;font-size:14.3px;color:#555;line-height:16px">Analytical</div>
<div class="abs" style="left:680px;top:537px;width:111px;height:30px;background:#17528a;border-radius:5px 5px 0 0;color:#fff;font-size:16.3px;line-height:30px;text-align:center">Time-Based</div>
<div class="abs" style="left:793px;top:537px;width:92px;height:29px;background:#a8c0d9;border:1px solid #9db4cc;border-bottom:none;border-radius:5px 5px 0 0;color:#555;font-size:16.3px;line-height:29px;text-align:center">Path Sets</div>
<!-- grid -->
<div class="abs" style="left:680px;top:566px;width:634px;height:347px;background:#fff;border:1px solid #34506e;border-left-width:2px"></div>
<div class="abs" style="left:682px;top:567px;width:609px;height:326px;overflow:hidden">
  <div class="gh" style="left:0;top:12px;width:100px">Time</div><div class="gcar" style="left:106px;top:21px"></div>
  <div class="gh" style="left:122px;top:12px;width:100px">Reliability</div><div class="gcar" style="left:228px;top:21px"></div>
  <div class="gh" style="left:244px;top:12px;width:100px">Unreliability</div><div class="gcar" style="left:350px;top:21px"></div>
  <div class="gh" style="left:366px;top:12px;width:100px">Failure Rate</div><div class="gcar" style="left:472px;top:21px"></div>
  <div class="gh" style="left:488px;top:3.5px;width:100px">Equivalent<br>Failure Rate</div><div class="gcar" style="left:594px;top:21px"></div>
  <div class="abs" style="left:122px;top:0;width:1px;height:279px;background:#e6e6e6"></div>
  <div class="abs" style="left:244px;top:0;width:1px;height:279px;background:#e6e6e6"></div>
  <div class="abs" style="left:366px;top:0;width:1px;height:279px;background:#e6e6e6"></div>
  <div class="abs" style="left:488px;top:0;width:1px;height:279px;background:#e6e6e6"></div>
  <div class="abs" style="left:0;top:33.5px;width:609px;height:2px;background:#2d7dbd"></div>
<div class="gr" style="top:36.0px"><span style="right:489px">0.000000</span><span style="right:367px">1.000000</span><span style="right:245px">0.000000</span><span style="right:122px">100.473693</span><span style="right:0px">100.473693</span></div>
<div class="gr" style="top:58.2px"><span style="right:489px">100.000000</span><span style="right:367px">0.990003</span><span style="right:245px">0.009997</span><span style="right:122px">100.473693</span><span style="right:0px">100.473693</span></div>
<div class="gr" style="top:80.4px"><span style="right:489px">200.000000</span><span style="right:367px">0.980106</span><span style="right:245px">0.019894</span><span style="right:122px">100.473693</span><span style="right:0px">100.473693</span></div>
<div class="gr" style="top:102.6px"><span style="right:489px">300.000000</span><span style="right:367px">0.970308</span><span style="right:245px">0.029692</span><span style="right:122px">100.473693</span><span style="right:0px">100.473693</span></div>
<div class="gr" style="top:124.8px"><span style="right:489px">400.000000</span><span style="right:367px">0.960607</span><span style="right:245px">0.039393</span><span style="right:122px">100.473693</span><span style="right:0px">100.473693</span></div>
<div class="gr" style="top:147.0px"><span style="right:489px">500.000000</span><span style="right:367px">0.951004</span><span style="right:245px">0.048996</span><span style="right:122px">100.473693</span><span style="right:0px">100.473693</span></div>
<div class="gr" style="top:169.2px"><span style="right:489px">600.000000</span><span style="right:367px">0.941497</span><span style="right:245px">0.058503</span><span style="right:122px">100.473693</span><span style="right:0px">100.473693</span></div>
<div class="gr" style="top:191.4px"><span style="right:489px">700.000000</span><span style="right:367px">0.932085</span><span style="right:245px">0.067915</span><span style="right:122px">100.473693</span><span style="right:0px">100.473693</span></div>
<div class="gr" style="top:213.6px"><span style="right:489px">800.000000</span><span style="right:367px">0.922767</span><span style="right:245px">0.077233</span><span style="right:122px">100.473693</span><span style="right:0px">100.473693</span></div>
<div class="gr" style="top:235.8px"><span style="right:489px">900.000000</span><span style="right:367px">0.913542</span><span style="right:245px">0.086458</span><span style="right:122px">100.473693</span><span style="right:0px">100.473693</span></div>
<div class="gr" style="top:258.0px"><span style="right:489px">1000.000000</span><span style="right:367px">0.904409</span><span style="right:245px">0.095591</span><span style="right:122px">100.473693</span><span style="right:0px">100.473693</span></div>
</div>
<!-- vscroll -->
<div class="abs" style="left:1291px;top:567px;width:21px;height:326px;background:#e3ebf4;border-left:1px solid #c6d3e2"></div>
<div class="abs" style="left:1309px;top:567px;width:3px;height:326px;background:#c8d6e6"></div>
<div class="abs" style="left:1292px;top:568px;width:18px;height:21px;background:#dbe5f1;border:1px solid #b7c8dc"></div>
<div class="abs" style="left:1297px;top:575px;width:0;height:0;border-bottom:4.5px solid #5a5a5a;border-left:4px solid transparent;border-right:4px solid transparent"></div>
<div class="abs" style="left:1292px;top:871px;width:18px;height:20px;background:#dbe5f1;border:1px solid #b7c8dc"></div>
<div class="abs" style="left:1297px;top:879px;width:0;height:0;border-top:4.5px solid #5a5a5a;border-left:4px solid transparent;border-right:4px solid transparent"></div>
<div class="abs" style="left:1296px;top:728px;width:10px;height:1.5px;background:#8a8f96"></div><div class="abs" style="left:1296px;top:731px;width:10px;height:1.5px;background:#8a8f96"></div>
<!-- hscroll -->
<div class="abs" style="left:682px;top:892px;width:609px;height:20px;background:#f3f3f3"></div>
<div class="abs" style="left:1291px;top:892px;width:21px;height:20px;background:#ececec"></div>
<div class="abs" style="left:682px;top:893px;width:20px;height:19px;background:#dbe5f1;border:1px solid #b7c8dc"></div>
<div class="abs" style="left:688px;top:898px;width:0;height:0;border-right:4.5px solid #5a5a5a;border-top:4px solid transparent;border-bottom:4px solid transparent"></div>
<div class="abs" style="left:1271px;top:893px;width:20px;height:19px;background:#dbe5f1;border:1px solid #b7c8dc"></div>
<div class="abs" style="left:1279px;top:898px;width:0;height:0;border-left:4.5px solid #5a5a5a;border-top:4px solid transparent;border-bottom:4px solid transparent"></div>
<div class="abs" style="left:797px;top:892px;width:379px;height:20px;background:#e6ecf4;border:1px solid #b4c4d8;border-bottom-color:#4f7ba0"></div>
<div class="abs" style="left:984px;top:897px;width:1.5px;height:10px;background:#777"></div><div class="abs" style="left:987px;top:897px;width:1.5px;height:10px;background:#777"></div>
<!-- buttons -->
<div class="btn" style="left:1139px;width:84px"><svg style="position:absolute;left:9px;top:9px" width="16" height="16" viewBox="0 0 16 16"><path d="M3.5 7 V1.800 H10.500 L12.500 3.800 V7" fill="none" stroke="#3f6f94" stroke-width="1.800"/><rect x="1" y="6.500" width="14" height="6" rx="1.200" fill="#3f6f94"/><rect x="3.800" y="10" width="8.400" height="4.200" fill="#fff" stroke="#3f6f94" stroke-width="1.500"/></svg><span style="padding-left:18px">Report</span></div>
<div class="btn" style="left:1233px;width:84px">Close</div>

</div>
</body>
</html>
